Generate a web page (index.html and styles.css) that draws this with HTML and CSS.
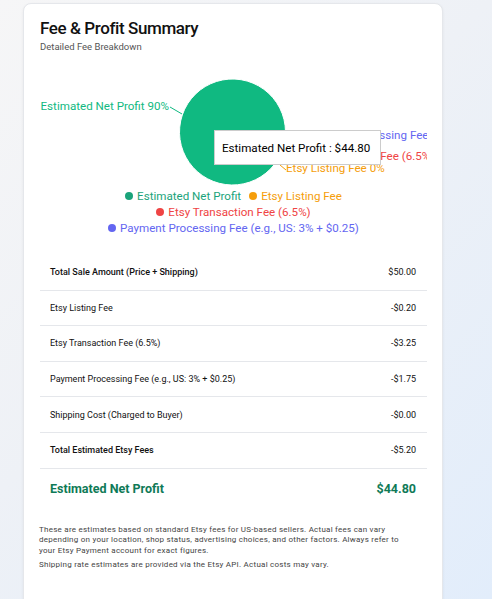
FILE: index.html
```html
<!DOCTYPE html>
<html lang="en">
<head>
<meta charset="utf-8">
<title>Fee &amp; Profit Summary</title>
<link rel="stylesheet" href="styles.css">
</head>
<body>
<div class="card">
  <h1 class="title">Fee &amp; Profit Summary</h1>
  <p class="subtitle">Detailed Fee Breakdown</p>

  <div class="chart">
    <svg class="pie" width="387" height="130" viewBox="0 0 387 130">
      <g stroke="#fff" stroke-width="1">
        <path d="M192.5 74 L245.5 74 A53 53 0 1 0 234.59 106.21 Z" fill="#10b981"/>
        <path d="M192.5 74 L234.59 106.21 A53 53 0 0 0 235.38 105.15 Z" fill="#f59e0b"/>
        <path d="M192.5 74 L235.38 105.15 A53 53 0 0 0 244.22 85.56 Z" fill="#ef4444"/>
        <path d="M192.5 74 L244.22 85.56 A53 53 0 0 0 245.5 74 Z" fill="#6366f1"/>
      </g>
      <g fill="none" stroke-width="1">
        <polyline points="142,56 130,49" stroke="#10b981"/>
        <polyline points="245,80 259,81" stroke="#6366f1"/>
        <polyline points="241,96 250,100" stroke="#ef4444"/>
        <polyline points="240,107 246,112" stroke="#f59e0b"/>
      </g>
      <g class="plabel">
        <text x="129" y="52" text-anchor="end" fill="#10b981">Estimated Net Profit 90%</text>
        <text x="261" y="81" fill="#6366f1">Payment Processing Fee (e.g., US: 3% + $0.25) 4%</text>
        <text x="252" y="102" fill="#ef4444">Etsy Transaction Fee (6.5%) 7%</text>
        <text x="246" y="114" fill="#f59e0b">Etsy Listing Fee 0%</text>
      </g>
    </svg>
    <div class="tooltip">Estimated Net Profit : $44.80</div>
  </div>

  <div class="legend">
    <div class="legend-row">
      <span class="item green"><i class="dot"></i>Estimated Net Profit</span>
      <span class="item orange"><i class="dot"></i>Etsy Listing Fee</span>
    </div>
    <div class="legend-row">
      <span class="item red"><i class="dot"></i>Etsy Transaction Fee (6.5%)</span>
    </div>
    <div class="legend-row">
      <span class="item purple"><i class="dot"></i>Payment Processing Fee (e.g., US: 3% + $0.25)</span>
    </div>
  </div>

  <div class="table">
    <div class="row strong"><span class="label">Total Sale Amount (Price + Shipping)</span><span>$50.00</span></div>
    <div class="row"><span class="label">Etsy Listing Fee</span><span>-$0.20</span></div>
    <div class="row"><span class="label">Etsy Transaction Fee (6.5%)</span><span>-$3.25</span></div>
    <div class="row"><span class="label">Payment Processing Fee (e.g., US: 3% + $0.25)</span><span>-$1.75</span></div>
    <div class="row"><span class="label">Shipping Cost (Charged to Buyer)</span><span>-$0.00</span></div>
    <div class="row strong"><span class="label">Total Estimated Etsy Fees</span><span>-$5.20</span></div>
    <div class="row net"><span class="label">Estimated Net Profit</span><span>$44.80</span></div>
  </div>

  <div class="note">
    <p>These are estimates based on standard Etsy fees for US-based sellers. Actual fees can vary depending on your location, shop status, advertising choices, and other factors. Always refer to your Etsy Payment account for exact figures.</p>
    <p>Shipping rate estimates are provided via the Etsy API. Actual costs may vary.</p>
  </div>
</div>
</body>
</html>
```

FILE: styles.css
```css
* { box-sizing: border-box; }

html, body { height: 100%; }

body {
  margin: 0;
  padding: 3px 0 0 23px;
  font-family: Roboto, "Liberation Sans", sans-serif;
  background: linear-gradient(135deg, #f6f6f7 0%, #eef1f6 45%, #e2edfb 100%);
  color: #111;
  overflow: hidden;
}

.card {
  width: 420px;
  min-height: 640px;
  background: #fff;
  border: 1px solid #e5e7eb;
  border-radius: 8px;
  box-shadow: 0 1px 3px rgba(0,0,0,0.06);
  padding: 13px 15px 16px 16px;
}

.title {
  margin: 0;
  font-size: 17px;
  line-height: 22px;
  font-weight: 500;
  letter-spacing: -0.4px;
  color: #111;
}

.subtitle {
  margin: 2px 0 0;
  font-size: 9.5px;
  line-height: 12px;
  color: #555;
}

.chart {
  position: relative;
  width: 387px;
  height: 130px;
  margin-top: 5px;
}

.pie {
  display: block;
  overflow: hidden;
}

.plabel text {
  font-family: Roboto, "Liberation Sans", sans-serif;
  font-size: 11.6px;
}

.tooltip {
  position: absolute;
  left: 174px;
  top: 72px;
  width: 167px;
  height: 35px;
  background: #fff;
  border: 1px solid #ccc;
  padding: 0 7px;
  display: flex;
  align-items: center;
  font-size: 11.6px;
  color: #000;
  white-space: nowrap;
}

.legend {
  display: flex;
  flex-direction: column;
  align-items: center;
  font-size: 11.6px;
  line-height: 16px;
}

.legend-row {
  display: flex;
  gap: 8px;
  justify-content: center;
}

.item {
  display: inline-flex;
  align-items: center;
  gap: 4px;
}

.dot {
  display: inline-block;
  width: 8px;
  height: 8px;
  border-radius: 50%;
  background: currentColor;
}

.green { color: #1aa37a; }
.orange { color: #f59e0b; }
.red { color: #ef4444; }
.purple { color: #6366f1; }

.table {
  margin-top: 19px;
}

.row {
  display: flex;
  justify-content: space-between;
  align-items: center;
  height: 35.6px;
  padding: 0 11px 0 10px;
  border-bottom: 1px solid #e5e7eb;
  font-size: 9px;
  color: #111;
}

.row.strong .label { font-weight: 500; }

.row.net {
  height: 40px;
  border-bottom: none;
  font-size: 12.5px;
  font-weight: 700;
  color: #0f7a57;
}

.row.net .label { font-weight: 700; }

.note {
  width: 378px;
  margin-top: 16px;
  margin-left: -1px;
  font-size: 8px;
  line-height: 10.5px;
  letter-spacing: 0.25px;
  color: #444;
}

.note p {
  margin: 0 0 4px;
}
```
